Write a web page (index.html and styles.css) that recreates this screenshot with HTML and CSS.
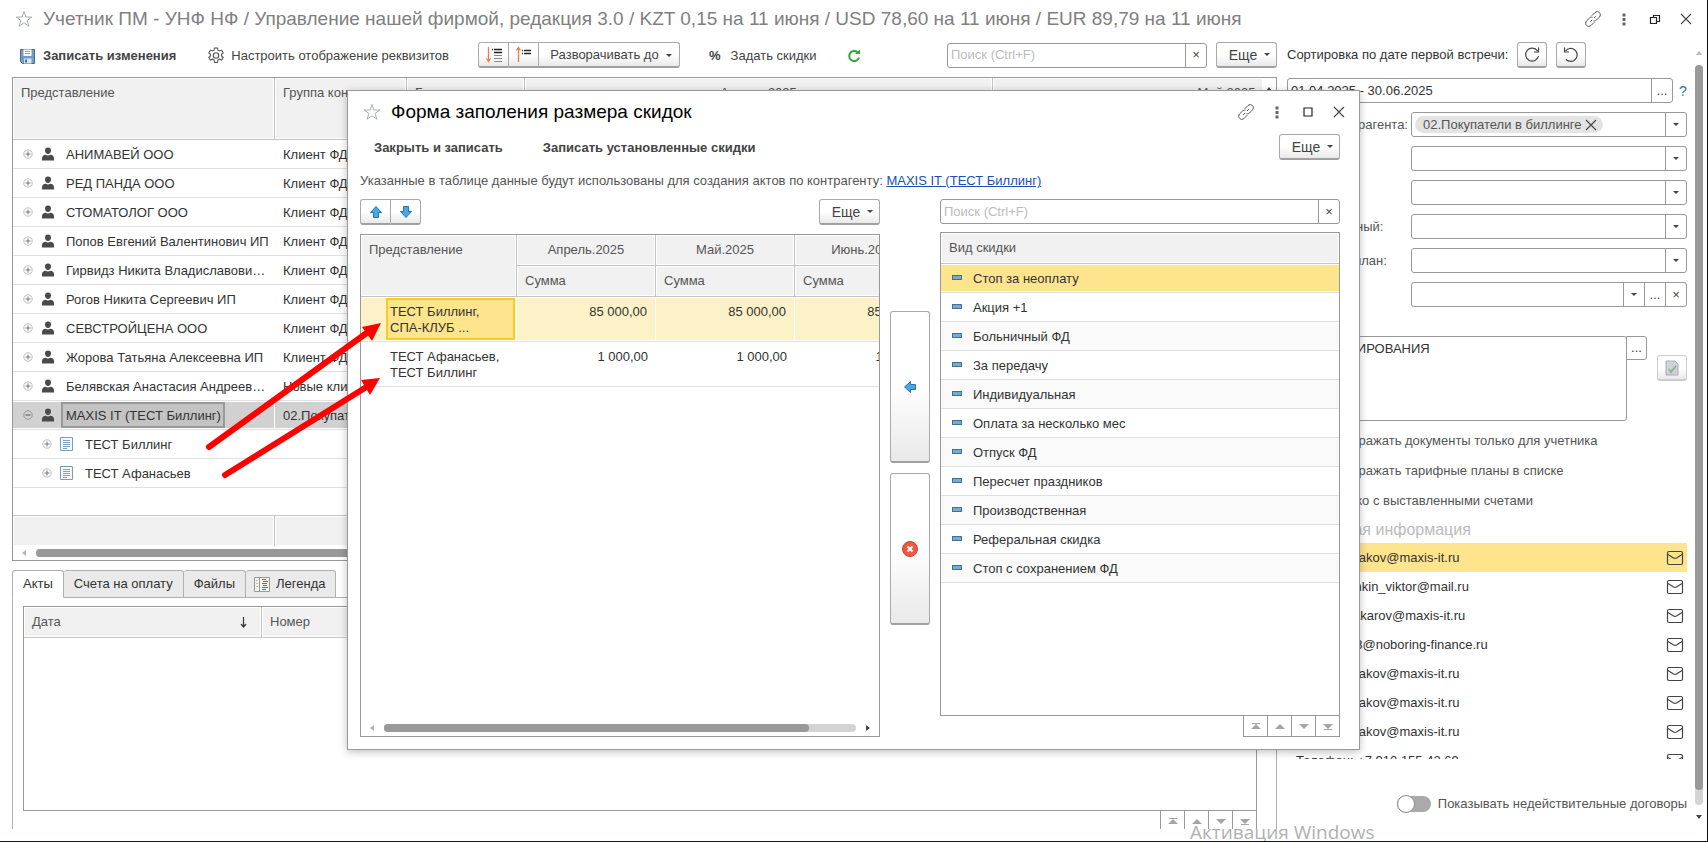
FILE: index.html
```
<!DOCTYPE html>
<html lang="ru-RU">

<head>
  <meta charset="utf-8">
  <title>Учетник ПМ - УНФ НФ</title>
  <link rel="stylesheet" href="styles.css">
</head>

<body>
  <!-- Набор иконок -->
  <svg class="sprite" xmlns="http://www.w3.org/2000/svg">
    <symbol id="star" viewBox="0 0 18 18">
      <path d="M9 1.5 L10.9 7 L16.8 7 L12.1 10.5 L13.9 16.2 L9 12.8 L4.1 16.2 L5.9 10.5 L1.2 7 L7.1 7 Z" fill="none" stroke="#a9adb3"></path>
    </symbol>
    <symbol id="link" viewBox="0 0 18 18">
      <g fill="none" stroke="#555" stroke-linecap="round">
        <path d="M8 5.500 L10.800 2.700 C12.300 1.200 14.300 1.500 15.400 2.600 C16.500 3.700 16.800 5.700 15.300 7.200 L12.500 10 C11.700 10.800 10.800 11 9.800 10.900"></path>
        <path d="M10 12.500 L7.200 15.300 C5.700 16.800 3.700 16.500 2.600 15.400 C1.500 14.300 1.200 12.300 2.700 10.800 L5.500 8 C6.300 7.200 7.200 7 8.200 7.100"></path>
        <path d="M6.500 11.500 L7.800 10.200 M10.200 7.800 L11.500 6.500"></path>
      </g>
    </symbol>
    <symbol id="dots" viewBox="0 0 18 18">
      <path d="M7.500 3.500h3v3h-3z M7.500 8h3v3h-3z M7.500 12.500h3v3h-3z" fill="#666"></path>
    </symbol>
    <symbol id="restore" viewBox="0 0 18 18">
      <path d="M4.500 7.500h6v6h-6z M7.500 7V5.500h6v6H11" fill="none" stroke="#222" stroke-width="1.200"></path>
    </symbol>
    <symbol id="square" viewBox="0 0 18 18">
      <path d="M5 5h8v8H5z" fill="none" stroke="#222" stroke-width="1.200"></path>
    </symbol>
    <symbol id="close" viewBox="0 0 18 18">
      <path d="M4 4 L14 14 M14 4 L4 14" fill="none" stroke="#444" stroke-width="1.100"></path>
    </symbol>
    <symbol id="plus" viewBox="0 0 10 10">
      <circle cx="5" cy="5" r="4.200" fill="none" stroke="#aaa" stroke-width=".8"></circle>
      <path d="M2.500 5h5 M5 2.500v5" stroke="#777"></path>
    </symbol>
    <symbol id="minus" viewBox="0 0 10 10">
      <circle cx="5" cy="5" r="4.200" fill="none" stroke="#888" stroke-width=".8"></circle>
      <path d="M2.500 5h5" stroke="#555"></path>
    </symbol>
    <symbol id="person" viewBox="0 0 14 14">
      <path d="M7 0.500c2 0 3 1.300 3 3c0 1.900-1.200 3.500-3 3.500s-3-1.600-3-3.500c0-1.700 1-3 3-3z M1 13.500v-2.500c0-2 1.500-3 3.800-3.300c1.200 1 3.200 1 4.400 0c2.300.3 3.800 1.300 3.800 3.300v2.500z" fill="#4a4a4a"></path>
    </symbol>
    <symbol id="doc" viewBox="0 0 14 14">
      <path d="M.5.5h12v13H.5z" fill="#f7fafc" stroke="#7f9bb0"></path>
      <path d="M3 3.500h7 M3 5.500h7 M3 7.500h7 M3 9.500h7 M3 11.500h4" stroke="#7ba4c4"></path>
    </symbol>
    <symbol id="mail" viewBox="0 0 18 18">
      <rect x="1.500" y="2.500" width="15" height="13" rx="1.500" fill="none" stroke="#444" stroke-width="1.200"></rect>
      <path d="M2 5.500 L7.500 9 Q9 9.800 10.500 9 L16 5.500" fill="none" stroke="#444" stroke-width="1.200"></path>
    </symbol>
    <symbol id="up" viewBox="0 0 12 12"><path d="M1 9h10L6 4z" fill="#a5a5a5"></path></symbol>
    <symbol id="down" viewBox="0 0 12 12"><path d="M1 4h10L6 9z" fill="#a5a5a5"></path></symbol>
    <symbol id="first" viewBox="0 0 12 12"><path d="M2 3h8v1H2z M1 9h10L6 4z" fill="#a5a5a5"></path></symbol>
    <symbol id="last" viewBox="0 0 12 12"><path d="M2 9h8v1H2z M1 4h10L6 9z" fill="#a5a5a5"></path></symbol>
    <symbol id="arrow" viewBox="0 0 14 14">
      <path d="M7 1.500 L12.500 7.500 H9.500 V12.500 H4.500 V7.500 H1.500 Z" fill="#42a9ee" stroke="#356f9b"></path>
    </symbol>
  </svg>

  <header class="titlebar">
    <svg class="icon"><use href="#star"></use></svg>
    <h1>Учетник ПМ - УНФ НФ / Управление нашей фирмой, редакция 3.0 / KZT 0,15 на 11 июня / USD 78,60 на 11 июня / EUR 89,79 на 11 июня</h1>
    <div class="window-buttons">
      <button aria-label="Ссылка"><svg class="icon"><use href="#link"></use></svg></button>
      <button aria-label="Меню"><svg class="icon"><use href="#dots"></use></svg></button>
      <button aria-label="Свернуть в окно"><svg class="icon"><use href="#restore"></use></svg></button>
      <button aria-label="Закрыть"><svg class="icon"><use href="#close"></use></svg></button>
    </div>
  </header>

  <main class="workspace">
    <section class="left">
      <div class="toolbar">
        <button class="plain save">
          <svg width="15" height="15" viewBox="0 0 15 15">
            <path d="M.5.5h14v14H2.500l-2-2z" fill="#6d9cca" stroke="#4a6e92"></path>
            <path d="M3.500.5h8v6.500h-8z" fill="#fff"></path>
            <path d="M5 2.500h5 M5 4.500h5" stroke="#8aa"></path>
            <path d="M4 9.500h7.500v5H4z" fill="#dde6ee"></path>
            <path d="M5 10.500h2v3H5z" fill="#4a6e92"></path>
          </svg>
          <b>Записать изменения</b>
        </button>
        <button class="plain settings">
          <svg width="18" height="18" viewBox="0 0 18 18" fill="none" stroke="#555" stroke-width="1.100">
            <path d="M7.500 1h3l.4 2.200 1.500.8 2.200-.9 1.600 2.700-1.700 1.500v1.600l1.700 1.500-1.600 2.700-2.200-.9-1.500.8-.4 2.500h-3l-.4-2.500-1.500-.8-2.200.9-1.600-2.700 1.700-1.500V7.300L1.800 5.800l1.600-2.700 2.200.9 1.500-.8z"></path>
            <circle cx="9" cy="8.500" r="2.700"></circle>
          </svg>
          Настроить отображение реквизитов
        </button>
        <div class="group">
          <button class="btn square" aria-label="Развернуть">
            <svg width="18" height="18" viewBox="0 0 18 18">
              <path d="M3.500 1v14 M1.500 12.500l2 3 2-3" fill="none" stroke="#f07d45" stroke-width="1.300"></path>
              <path d="M7 3.500h1 M9 3.500h8 M9 6.500h8" stroke="#222" stroke-width="1.300"></path>
              <path d="M9 9.500h8 M9 12.500h8 M9 15.500h8" stroke="#888"></path>
            </svg>
          </button>
          <button class="btn square" aria-label="Свернуть">
            <svg width="18" height="18" viewBox="0 0 18 18">
              <path d="M3.500 16v-14 M1.500 4.500l2-3 2 3" fill="none" stroke="#f07d45" stroke-width="1.300"></path>
              <path d="M7 4.500h1 M9 4.500h7 M7 7.500h1 M9 7.500h7" stroke="#222" stroke-width="1.300"></path>
            </svg>
          </button>
          <button class="btn expand">Разворачивать до <i class="caret"></i></button>
        </div>
        <button class="plain discounts"><b>%</b> Задать скидки</button>
        <button class="plain" aria-label="Обновить">
          <svg width="14" height="14" viewBox="0 0 14 14">
            <path d="M10.500 3.300 A5 5 0 1 0 12 8.500" fill="none" stroke="#2fa83c" stroke-width="2"></path>
            <path d="M8 5h5V.5z" fill="#2fa83c"></path>
          </svg>
        </button>
        <div class="field search">
          <input type="text" placeholder="Поиск (Ctrl+F)" aria-label="Поиск">
          <button aria-label="Очистить">×</button>
        </div>
        <button class="btn more">Еще <i class="caret"></i></button>
      </div>

      <div class="grid main-grid">
        <div class="grid-body">
          <table>
            <colgroup><col class="c262"><col class="c132"><col class="c118"><col class="c468"><col class="c468"></colgroup>
            <thead>
              <tr>
                <th>Представление</th>
                <th>Группа контрагента</th>
                <th>Баланс</th>
                <th class="center">Апрель.2025</th>
                <th class="center">Май.2025</th>
              </tr>
            </thead>
            <tbody>
              <tr><td><svg class="tree"><use href="#plus"></use></svg><svg class="pic"><use href="#person"></use></svg><span>АНИМАВЕЙ ООО</span></td><td>Клиент ФД</td><td></td><td></td><td></td></tr>
              <tr><td><svg class="tree"><use href="#plus"></use></svg><svg class="pic"><use href="#person"></use></svg><span>РЕД ПАНДА ООО</span></td><td>Клиент ФД</td><td></td><td></td><td></td></tr>
              <tr><td><svg class="tree"><use href="#plus"></use></svg><svg class="pic"><use href="#person"></use></svg><span>СТОМАТОЛОГ ООО</span></td><td>Клиент ФД</td><td></td><td></td><td></td></tr>
              <tr><td><svg class="tree"><use href="#plus"></use></svg><svg class="pic"><use href="#person"></use></svg><span>Попов Евгений Валентинович ИП</span></td><td>Клиент ФД</td><td></td><td></td><td></td></tr>
              <tr><td><svg class="tree"><use href="#plus"></use></svg><svg class="pic"><use href="#person"></use></svg><span>Гирвидз Никита Владиславови…</span></td><td>Клиент ФД</td><td></td><td></td><td></td></tr>
              <tr><td><svg class="tree"><use href="#plus"></use></svg><svg class="pic"><use href="#person"></use></svg><span>Рогов Никита Сергеевич ИП</span></td><td>Клиент ФД</td><td></td><td></td><td></td></tr>
              <tr><td><svg class="tree"><use href="#plus"></use></svg><svg class="pic"><use href="#person"></use></svg><span>СЕВСТРОЙЦЕНА ООО</span></td><td>Клиент ФД</td><td></td><td></td><td></td></tr>
              <tr><td><svg class="tree"><use href="#plus"></use></svg><svg class="pic"><use href="#person"></use></svg><span>Жорова Татьяна Алексеевна ИП</span></td><td>Клиент ФД</td><td></td><td></td><td></td></tr>
              <tr><td><svg class="tree"><use href="#plus"></use></svg><svg class="pic"><use href="#person"></use></svg><span>Белявская Анастасия Андреев…</span></td><td>Новые клиенты</td><td></td><td></td><td></td></tr>
              <tr class="selected"><td><svg class="tree"><use href="#minus"></use></svg><svg class="pic"><use href="#person"></use></svg><span>MAXIS IT (ТЕСТ Биллинг)</span></td><td>02.Покупатели</td><td></td><td></td><td></td></tr>
              <tr class="child"><td><svg class="tree"><use href="#plus"></use></svg><svg class="pic"><use href="#doc"></use></svg><span>ТЕСТ Биллинг</span></td><td></td><td></td><td></td><td></td></tr>
              <tr class="child"><td><svg class="tree"><use href="#plus"></use></svg><svg class="pic"><use href="#doc"></use></svg><span>ТЕСТ Афанасьев</span></td><td></td><td></td><td></td><td></td></tr>
            </tbody>
          </table>
          <div class="vscroll"><i class="tri-up dark"></i></div>
        </div>
        <div class="grid-footer"><div class="c262"></div><div class="c132"></div><div class="rest"></div></div>
        <div class="hscroll"><i class="tri-left"></i><div class="track"><div class="thumb long"></div></div><i class="tri-right"></i></div>
      </div>

      <div class="tabs-area">
        <nav class="tabs">
          <button class="tab active">Акты</button>
          <button class="tab">Счета на оплату</button>
          <button class="tab">Файлы</button>
          <button class="tab">
            <svg width="16" height="15" viewBox="0 0 16 15">
              <path d="M.5.5h15v14H.5z" fill="#f4f2ef" stroke="#999"></path>
              <path d="M5.500 0v15" stroke="#999"></path>
              <path d="M2 3.500h2 M2 6.500h2 M2 9.500h2" stroke="#bbb"></path>
              <path d="M8 2.500h4 M9 4.500h5 M8 6.500h5 M9 8.500h4 M8 10.500h6 M8 12.500h4" stroke="#8a6a50"></path>
            </svg>
            Легенда
          </button>
          <div class="tabs-line"></div>
        </nav>
        <div class="tab-page">
          <div class="grid acts">
            <table>
              <colgroup><col class="c238"><col></colgroup>
              <thead>
                <tr>
                  <th><div class="sorted">Дата
                    <svg width="9" height="12" viewBox="0 0 9 12"><path d="M4.500 1v9 M2 8l2.500 3L7 8" fill="none" stroke="#333" stroke-width="1.200"></path></svg></div>
                  </th>
                  <th>Номер</th>
                </tr>
              </thead>
            </table>
          </div>
          <div class="pager">
            <button aria-label="В начало"><svg><use href="#first"></use></svg></button>
            <button aria-label="Вверх"><svg><use href="#up"></use></svg></button>
            <button aria-label="Вниз"><svg><use href="#down"></use></svg></button>
            <button aria-label="В конец"><svg><use href="#last"></use></svg></button>
          </div>
        </div>
      </div>
    </section>

    <aside class="right">
      <div class="sort">
        <span>Сортировка по дате первой встречи:</span>
        <button class="btn square" aria-label="По возрастанию">
          <svg width="18" height="18" viewBox="0 0 18 18" fill="none" stroke="#444" stroke-width="1.200"><path d="M14.500 5 A6.500 6.500 0 1 0 15.500 10 M15.500 1.500V6H11"></path></svg>
        </button>
        <button class="btn square" aria-label="По убыванию">
          <svg width="18" height="18" viewBox="0 0 18 18" fill="none" stroke="#444" stroke-width="1.200"><path d="M3.500 5 A6.500 6.500 0 1 1 4 13.500 M2.500 1.500V6H7"></path></svg>
        </button>
      </div>
      <div class="period">
        <div class="field">
          <input type="text" value="01.04.2025 - 30.06.2025" aria-label="Период">
          <button aria-label="Выбрать">...</button>
        </div>
        <a href="#help">?</a>
      </div>
      <div class="filters">
        <label for="f1">Группа контрагента:</label>
        <div class="field">
          <span class="chip">02.Покупатели в биллинге <svg width="12" height="12" viewBox="3 3 12 12"><use href="#close" width="18" height="18"></use></svg></span>
          <select id="f1"></select><i class="drop"></i>
        </div>
        <span></span>
        <div class="field"><select aria-label="Фильтр 2"></select><i class="drop"></i></div>
        <span></span>
        <div class="field"><select aria-label="Фильтр 3"></select><i class="drop"></i></div>
        <label for="f4">Ответственный:</label>
        <div class="field"><select id="f4"></select><i class="drop"></i></div>
        <label for="f5">Тарифный план:</label>
        <div class="field"><select id="f5"></select><i class="drop"></i></div>
        <span></span>
        <div class="field"><select aria-label="Фильтр 6"></select><i class="drop"></i><button aria-label="Выбрать">...</button><button aria-label="Очистить">×</button></div>
      </div>
      <div class="comment">
        <textarea aria-label="Комментарий">ДЛЯ ТЕСТИРОВАНИЯ</textarea>
        <button class="pick" aria-label="Выбрать">...</button>
        <button class="btn square" aria-label="Записать комментарий" disabled>
          <svg width="14" height="16" viewBox="0 0 14 16"><path d="M1 1h9l3 3v11H1z" fill="#cfd3d6" stroke="#aab"></path><path d="M4 9l2 3 5-6" fill="none" stroke="#8fb79a" stroke-width="2"></path></svg>
        </button>
      </div>
      <div class="flags">
        <label><input type="checkbox" class="switch">Отображать документы только для учетника</label>
        <label><input type="checkbox" class="switch">Отображать тарифные планы в списке</label>
        <label><input type="checkbox" class="switch">Только с выставленными счетами</label>
      </div>
      <h2>Контактная информация</h2>
      <ul class="contacts">
        <li class="current">Email: e.lisakov@maxis-it.ru<svg class="icon"><use href="#mail"></use></svg></li>
        <li>Email: pronkin_viktor@mail.ru<svg class="icon"><use href="#mail"></use></svg></li>
        <li>Email: i.makarov@maxis-it.ru<svg class="icon"><use href="#mail"></use></svg></li>
        <li>Email: lik18@noboring-finance.ru<svg class="icon"><use href="#mail"></use></svg></li>
        <li>Email: e.lisakov@maxis-it.ru<svg class="icon"><use href="#mail"></use></svg></li>
        <li>Email: e.lisakov@maxis-it.ru<svg class="icon"><use href="#mail"></use></svg></li>
        <li>Email: e.lisakov@maxis-it.ru<svg class="icon"><use href="#mail"></use></svg></li>
        <li>Телефон: +7 910 155 42 69<svg class="icon"><use href="#mail"></use></svg></li>
      </ul>
      <label class="inactive"><input type="checkbox" class="switch">Показывать недействительные договоры</label>
    </aside>

    <div class="page-scroll"><i class="tri-up"></i><div class="track"><div class="thumb"></div></div><i class="tri-down"></i></div>
  </main>

  <div class="activation">Активация Windows</div>

  <!-- Окно скидок -->
  <div class="dialog" role="dialog" aria-labelledby="dialogTitle">
    <header class="dialog-title">
      <svg class="icon"><use href="#star"></use></svg>
      <h1 id="dialogTitle">Форма заполения размера скидок</h1>
      <div class="window-buttons">
        <button aria-label="Ссылка"><svg class="icon"><use href="#link"></use></svg></button>
        <button aria-label="Меню"><svg class="icon"><use href="#dots"></use></svg></button>
        <button aria-label="Развернуть"><svg class="icon"><use href="#square"></use></svg></button>
        <button aria-label="Закрыть"><svg class="icon"><use href="#close"></use></svg></button>
      </div>
    </header>
    <div class="commands">
      <button class="plain"><b>Закрыть и записать</b></button>
      <button class="plain"><b>Записать установленные скидки</b></button>
      <button class="btn more">Еще <i class="caret"></i></button>
    </div>
    <p class="hint">Указанные в таблице данные будут использованы для создания актов по контрагенту: <a href="#maxis">MAXIS IT (ТЕСТ Биллинг)</a></p>

    <div class="columns">
      <section class="sums">
        <div class="sums-bar">
          <div class="group">
            <button class="btn square" aria-label="Вверх"><svg width="14" height="14"><use href="#arrow"></use></svg></button>
            <button class="btn square" aria-label="Вниз"><svg width="14" height="14" class="turn-down"><use href="#arrow"></use></svg></button>
          </div>
          <button class="btn more">Еще <i class="caret"></i></button>
        </div>
        <div class="grid">
          <div class="grid-body">
            <table>
              <colgroup><col class="c156"><col class="c139"><col class="c139"><col class="c139"></colgroup>
              <thead>
                <tr>
                  <th rowspan="2">Представление</th>
                  <th class="center">Апрель.2025</th>
                  <th class="center">Май.2025</th>
                  <th class="center">Июнь.2025</th>
                </tr>
                <tr><th>Сумма</th><th>Сумма</th><th>Сумма</th></tr>
              </thead>
              <tbody>
                <tr class="current"><td><div class="cell">ТЕСТ Биллинг,<br>СПА-КЛУБ ...</div></td><td>85 000,00</td><td>85 000,00</td><td>85 000,00</td></tr>
                <tr><td><div class="cell">ТЕСТ Афанасьев,<br>ТЕСТ Биллинг</div></td><td>1 000,00</td><td>1 000,00</td><td>1 000,00</td></tr>
              </tbody>
            </table>
          </div>
          <div class="hscroll"><i class="tri-left"></i><div class="track"><div class="thumb"></div></div><i class="tri-right"></i></div>
        </div>
      </section>

      <div class="transfer">
        <button class="btn" aria-label="Добавить скидку"><svg width="14" height="14" class="turn-left"><use href="#arrow"></use></svg></button>
        <button class="btn" aria-label="Удалить скидку">
          <svg width="16" height="16" viewBox="0 0 16 16"><circle cx="8" cy="8" r="7.500" fill="#f4553f" stroke="#b8473c"></circle><path d="M5.500 5.500l5 5 M10.500 5.500l-5 5" stroke="#fff" stroke-width="2"></path></svg>
        </button>
      </div>

      <section class="kinds">
        <div class="field search">
          <input type="text" placeholder="Поиск (Ctrl+F)" aria-label="Поиск скидки">
          <button aria-label="Очистить">×</button>
        </div>
        <div class="grid">
          <table>
            <thead><tr><th>Вид скидки</th></tr></thead>
            <tbody>
              <tr class="current"><td>Стоп за неоплату</td></tr>
              <tr><td>Акция +1</td></tr>
              <tr><td>Больничный ФД</td></tr>
              <tr><td>За передачу</td></tr>
              <tr><td>Индивидуальная</td></tr>
              <tr><td>Оплата за несколько мес</td></tr>
              <tr><td>Отпуск ФД</td></tr>
              <tr><td>Пересчет праздников</td></tr>
              <tr><td>Производственная</td></tr>
              <tr><td>Реферальная скидка</td></tr>
              <tr><td>Стоп с сохранением ФД</td></tr>
            </tbody>
          </table>
        </div>
        <div class="pager">
          <button aria-label="В начало"><svg><use href="#first"></use></svg></button>
          <button aria-label="Вверх"><svg><use href="#up"></use></svg></button>
          <button aria-label="Вниз"><svg><use href="#down"></use></svg></button>
          <button aria-label="В конец"><svg><use href="#last"></use></svg></button>
        </div>
      </section>
    </div>
  </div>

  <!-- Красные стрелки от договоров к строкам таблицы -->
  <svg class="pointers" width="400" height="500">
    <g stroke="red" stroke-width="6" stroke-linecap="round">
      <line x1="209" y1="447" x2="368" y2="332"></line>
      <line x1="225" y1="475" x2="368" y2="386"></line>
    </g>
    <g fill="red">
      <polygon points="381,323 362,327 372,341"></polygon>
      <polygon points="380,378 361,380 370,395"></polygon>
    </g>
  </svg>
</body>

</html>
```
FILE: styles.css
```
*, *::before, *::after {
  box-sizing: border-box;
}

body {
  margin: 0;
  height: 100vh;
  display: flex;
  flex-direction: column;
  padding-bottom: 12px;
  border-right: 1px solid #111;
  border-bottom: 1px solid #0b1622;
  overflow: hidden;
  position: relative;
  background: white;
  color: #333;
  font-family: "Liberation Sans", Arial, sans-serif;
  font-size: 13px;
  line-height: 16px;
}

button, input, select, textarea {
  font: inherit;
  color: inherit;
}

button {
  padding: 0;
  border: none;
  background: none;
  cursor: pointer;
}

svg {
  flex: none;
  display: block;
}

a {
  color: #1a50b4;
}

.sprite {
  display: none;
}

.icon {
  width: 18px;
  height: 18px;
}

/* Заголовки окон */
.titlebar, .dialog-title {
  display: flex;
  align-items: center;
  gap: 10px;
}

.titlebar {
  height: 38px;
  padding: 0 12px 0 15px;
}

h1 {
  margin: 0;
  flex: 1;
  font-size: 19px;
  line-height: 22px;
  font-weight: normal;
  white-space: nowrap;
  color: #808080;
}

.window-buttons {
  display: flex;
  gap: 13px;
}

/* Кнопки */
.btn {
  height: 26px;
  display: flex;
  align-items: center;
  justify-content: center;
  border: 1px solid #aaa;
  border-bottom: 2px solid #a0a0a0;
  border-radius: 3px;
  background: linear-gradient(white 50%, #e9e9e9);
  color: #444;
}

.btn:disabled {
  border-color: #ccc;
}

.square {
  width: 30px;
}

.more {
  width: 61px;
  gap: 7px;
  padding-left: 6px;
  font-size: 14px;
}

.group {
  display: flex;
}

.group .btn:first-child {
  width: 31px;
}

.group .btn:not(:first-child) {
  border-left: none;
  border-top-left-radius: 0;
  border-bottom-left-radius: 0;
}

.group .btn:not(:last-child) {
  border-top-right-radius: 0;
  border-bottom-right-radius: 0;
}

.expand {
  width: 141px;
  gap: 7px;
  padding: 1px 0 0 4px;
}

.caret, .drop::after {
  width: 6px;
  border: 3px solid transparent;
  border-top-color: #444;
  border-bottom: none;
}

.plain {
  display: flex;
  align-items: center;
  gap: 8px;
  padding-top: 2px;
  color: #444;
  white-space: nowrap;
}

/* Поля */
.field {
  display: flex;
  height: 25px;
  border: 1px solid #999;
  border-radius: 3px;
  background: white;
  overflow: hidden;
}

.field input, .field select {
  flex: 1;
  min-width: 0;
  padding: 0 3px;
  border: none;
  outline: none;
  appearance: none;
  background: none;
}

.field input::placeholder {
  color: #bbb;
}

.field button, .drop {
  width: 21px;
  border-left: 1px solid #999;
  color: #444;
}

.drop {
  display: flex;
  align-items: center;
  justify-content: center;
}

.drop::after {
  content: "";
}

.chip {
  display: flex;
  align-items: center;
  gap: 3px;
  height: 17px;
  margin: 3px;
  padding: 0 6px 0 8px;
  border-radius: 9px;
  background: #e4e4e4;
  white-space: nowrap;
}

/* Основная область */
.workspace {
  flex: 1;
  min-height: 0;
  display: flex;
  padding: 4px 4px 0 12px;
}

.left {
  flex: 1;
  min-width: 0;
  display: flex;
  flex-direction: column;
  margin-right: 10px;
}

.toolbar {
  display: flex;
  align-items: center;
  padding-left: 8px;
  margin-bottom: 9px;
}

.settings {
  margin: 0 29px 0 31px;
  gap: 6px;
}

.discounts {
  margin: 0 30px 0 29px;
  gap: 10px;
}

.toolbar .search {
  width: 260px;
  margin: 0 9px 0 auto;
}

/* Таблицы */
.grid {
  display: flex;
  flex-direction: column;
  border: 1px solid #999;
  background: white;
  overflow: hidden;
}

.grid-body {
  flex: 1;
  min-height: 0;
  display: flex;
  overflow: hidden;
  position: relative;
}

table {
  width: 100%;
  table-layout: fixed;
  border-spacing: 0;
}

th, td {
  padding: 0 8px;
  text-align: left;
  font-weight: normal;
  white-space: nowrap;
}

th {
  height: 31px;
  padding-top: 7px;
  vertical-align: top;
  border-right: 1px solid #c4c4c4;
  border-bottom: 1px solid #c4c4c4;
  box-shadow: inset 0 0 0 1px white;
  background: #f1f1f1;
  color: #555;
}

td {
  height: 29px;
  padding-top: 2px;
  border-bottom: 1px solid #e0e0e0;
}

.center {
  text-align: center;
}

.c118 { width: 118px; }
.c132 { width: 132px; }
.c139 { width: 139px; }
.c156 { width: 156px; }
.c238 { width: 238px; }
.c262 { width: 262px; }
.c468 { width: 468px; }

.main-grid {
  flex: 1;
  min-height: 0;
}

.main-grid table {
  flex: none;
  width: 1448px;
  align-self: flex-start;
}

.main-grid th {
  height: 62px;
}

.main-grid td {
  overflow: hidden;
}

.main-grid td:first-child {
  display: flex;
  align-items: center;
  padding-top: 0;
  padding-left: 10px;
}

.tree {
  width: 10px;
  height: 10px;
}

.pic {
  width: 14px;
  height: 14px;
  margin: 0 6px 0 8px;
}

.main-grid td span {
  padding: 4px 2px 2px 3px;
  border: 2px solid transparent;
}

.main-grid .child td:first-child {
  padding-left: 29px;
}

.selected td {
  background: #d1d1d1;
  border-right: 1px solid white;
  box-shadow: inset 0 1px white, inset 0 -1px white;
}

.main-grid .selected span {
  border-color: #999;
  background: #c3c3c3;
}

.vscroll {
  position: absolute;
  top: 0;
  right: 0;
  bottom: 0;
  width: 14px;
  padding: 9px 4px;
  background: white;
}

.grid-footer {
  display: flex;
  height: 31px;
  border-top: 1px solid #c4c4c4;
}

.grid-footer div {
  flex: none;
  border-right: 1px solid #c4c4c4;
  box-shadow: inset 0 0 0 1px white;
  background: #f1f1f1;
}

.grid-footer .rest {
  flex: 1;
}

/* Полосы прокрутки */
.hscroll {
  display: flex;
  align-items: center;
  gap: 10px;
  height: 14px;
  padding: 0 9px;
}

.track {
  flex: 1;
  height: 8px;
  border-radius: 4px;
  background: #d4d4d4;
}

.thumb {
  width: 90%;
  height: 8px;
  border-radius: 4px;
  background: #999;
}

.tri-left, .tri-right, .tri-up, .tri-down {
  border: 3px solid transparent;
}

.tri-left { border-left: none; border-right: 4px solid #b5b5b5; }
.tri-right { border-right: none; border-left: 4px solid #444; }
.tri-up { border-top: none; border-bottom: 4px solid #b5b5b5; }
.tri-down { border-bottom: none; border-top: 4px solid #444; }
.dark { border-bottom-color: #444; display: block; }

/* Вкладки */
.tabs-area {
  flex: none;
  height: 259px;
  margin-top: 9px;
  display: flex;
  flex-direction: column;
  overflow: hidden;
}

.tabs {
  display: flex;
}

.tab {
  display: flex;
  align-items: center;
  gap: 6px;
  height: 28px;
  padding: 0 10px;
  border: 1px solid #b0b0b0;
  border-left: none;
  border-radius: 3px 3px 0 0;
  background: #eaeaea;
}

.tab:nth-child(4) {
  padding-left: 8px;
}

.tab.active {
  border-left: 1px solid #b0b0b0;
  border-bottom-color: white;
  background: white;
}

.tabs-line {
  flex: 1;
  border-bottom: 1px solid #b0b0b0;
}

.tab-page {
  padding: 8px 19px 0 10px;
  border-left: 1px solid #b0b0b0;
  border-right: 1px solid #b0b0b0;
}

.acts {
  height: 205px;
}

.sorted {
  display: flex;
  justify-content: space-between;
  align-items: center;
  padding-right: 5px;
}

.pager {
  display: flex;
  justify-content: flex-end;
  margin-top: -1px;
}

.pager button {
  display: flex;
  align-items: center;
  justify-content: center;
  width: 25px;
  height: 22px;
  margin-left: -1px;
  border: 1px solid #999;
}

.pager svg {
  width: 12px;
  height: 12px;
}

/* Правая панель */
.right {
  flex: none;
  width: 400px;
  display: flex;
  flex-direction: column;
}

.sort {
  display: flex;
  align-items: center;
  gap: 9px;
  margin-bottom: 10px;
}

.period {
  display: flex;
  align-items: center;
  gap: 6px;
  margin-bottom: 9px;
}

.period .field {
  width: 386px;
}

.period a {
  color: #0a78c8;
  font-size: 14px;
  text-decoration: none;
}

.filters {
  display: grid;
  grid-template-columns: 1fr 276px;
  align-items: center;
  row-gap: 9px;
  color: #555;
}

.comment {
  display: flex;
  margin-top: 29px;
}

textarea {
  width: 340px;
  height: 85px;
  padding: 4px 5px;
  border: 1px solid #999;
  border-radius: 3px;
  resize: none;
}

.pick {
  width: 21px;
  height: 24px;
  margin: 0 10px 0 -1px;
  border: 1px solid #999;
  border-radius: 0 3px 3px 0;
}

.comment .btn {
  margin-top: 19px;
}

.flags {
  display: flex;
  flex-direction: column;
  gap: 14px;
  margin-top: 12px;
  color: #555;
}

.flags label, .inactive {
  display: flex;
  align-items: center;
  gap: 7px;
}

.switch {
  appearance: none;
  width: 34px;
  height: 16px;
  margin: 0;
  border-radius: 8px;
  background: #aaa;
}

.switch::before {
  content: "";
  display: block;
  width: 18px;
  height: 18px;
  margin-top: -1px;
  border: 1px solid #888;
  border-radius: 50%;
  background: white;
}

h2 {
  margin: 11px 0 3px;
  font-size: 16px;
  line-height: 20px;
  font-weight: normal;
  color: #bbb;
}

.contacts {
  flex: none;
  height: 216px;
  margin: 0;
  padding: 0;
  overflow: hidden;
  list-style: none;
}

.contacts li {
  display: flex;
  align-items: center;
  justify-content: space-between;
  height: 29px;
  padding: 0 3px 0 9px;
}

.contacts .current {
  background: #fde48d;
}

.inactive {
  justify-content: flex-end;
  margin-top: 37px;
  color: #555;
  white-space: nowrap;
}

.page-scroll {
  display: flex;
  flex-direction: column;
  align-items: center;
  gap: 10px;
  width: 8px;
  margin-left: 8px;
  padding: 9px 0 10px;
}

.page-scroll .track {
  width: 8px;
}

.page-scroll .thumb {
  width: 8px;
  height: 98%;
}

.activation {
  position: absolute;
  left: 1190px;
  bottom: -4px;
  font-family: "Open Sans", sans-serif;
  font-size: 19px;
  line-height: 26px;
  color: #b0b0b0;
}

/* Окно скидок */
.dialog {
  position: absolute;
  inset: 90px 347px 91px 347px;
  display: flex;
  flex-direction: column;
  padding: 10px 19px 12px 12px;
  border: 1px solid #999;
  background: white;
  box-shadow: 0 2px 8px rgba(0, 0, 0, 0.25);
}

.dialog-title {
  height: 22px;
  padding-left: 3px;
  margin-right: -8px;
}

.dialog-title h1 {
  color: black;
}

.commands {
  display: flex;
  gap: 40px;
  margin-top: 11px;
  padding-left: 14px;
}

.commands .more {
  margin-left: auto;
}

.hint {
  margin: 13px 0 10px;
  color: #555;
}

.columns {
  flex: 1;
  min-height: 0;
  display: flex;
  gap: 10px;
}

.sums {
  flex: 1;
  min-width: 0;
  display: flex;
  flex-direction: column;
}

.sums-bar {
  display: flex;
  justify-content: space-between;
  margin-bottom: 9px;
}

.sums .grid {
  flex: 1;
}

.sums table {
  flex: none;
  width: 573px;
  align-self: flex-start;
}

.sums td {
  height: 45px;
  padding-top: 7px;
  text-align: right;
  vertical-align: top;
}

.sums td:first-child {
  padding: 1px 1px 1px 25px;
  text-align: left;
}

.sums .cell {
  height: 42px;
  padding: 4px 2px;
  border: 2px solid transparent;
}

.sums .current td {
  border-right: 1px solid white;
  background: #fdf1c7;
  box-shadow: inset 0 1px white, inset 0 -1px white;
}

.sums .current .cell {
  border-color: #fcca20;
  background: #fde48d;
}

.sums .hscroll {
  height: 16px;
}

.transfer {
  flex: none;
  width: 40px;
  display: flex;
  flex-direction: column;
  gap: 10px;
  padding-top: 112px;
}

.transfer .btn {
  height: 152px;
}

.turn-down { transform: rotate(180deg); }
.turn-left { transform: rotate(-90deg); }

.kinds {
  flex: none;
  width: 400px;
  display: flex;
  flex-direction: column;
}

.kinds .grid {
  flex: 1;
  margin-top: 8px;
}

.kinds th {
  border-right: none;
}

.kinds td::before {
  content: "";
  display: inline-block;
  width: 10px;
  height: 5px;
  margin: 0 11px 3px 3px;
  border: 1px solid #44708f;
  background: #76abd6;
}

.kinds tr:nth-child(odd) td {
  background: #fafafa;
}

.kinds .current td, .kinds tr.current:nth-child(odd) td {
  background: #fde48d;
  box-shadow: inset 0 1px white, inset 0 -1px white;
}

.pointers {
  position: absolute;
  top: 0;
  left: 0;
  pointer-events: none;
}
```
